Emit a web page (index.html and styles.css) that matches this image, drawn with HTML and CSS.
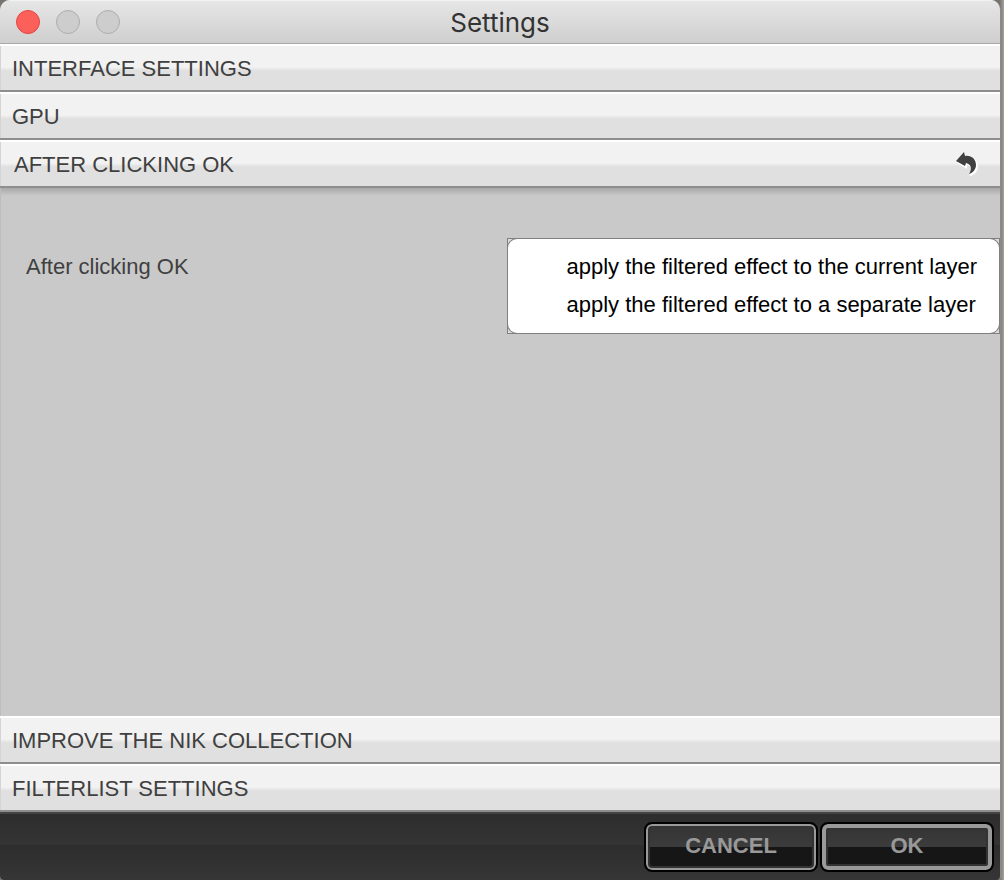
FILE: index.html
```html
<!DOCTYPE html>
<html lang="en">
<head>
<meta charset="UTF-8" />
<meta name="viewport" content="width=device-width, initial-scale=1" />
<title>Settings</title>
<link rel="stylesheet" href="styles.css">
</head>
<body>

<form class="window">
  <header class="titlebar">
    <div class="lights">
      <button type="button" class="light close" aria-label="Close"></button>
      <button type="button" class="light" aria-label="Minimize" disabled></button>
      <button type="button" class="light" aria-label="Zoom" disabled></button>
    </div>
    <h1>Settings</h1>
  </header>

  <main class="sections">
    <h2 class="section-header"><button type="button" class="toggle" aria-expanded="false">INTERFACE SETTINGS</button></h2>
    <h2 class="section-header"><button type="button" class="toggle" aria-expanded="false">GPU</button></h2>

    <div class="section-header">
      <h2><button type="button" class="toggle open" aria-expanded="true">AFTER CLICKING OK</button></h2>
      <button type="button" class="reset" aria-label="Reset">
        <svg width="24" height="26" viewBox="0 0 24 26">
          <path class="arrow-light" d="M1 12 L10 3 L10 7 C17 6 22 10 22 15 C22 20 19 24 14 25 L13 22 C16 19 17 15 11 14 L11 18 Z" />
          <path class="arrow" d="M0 10 L8 1 L9 5 C15 4 20 8 20 14 C20 18 17 22 13 23 C16 18 16 14 10 12 L9 15 Z" />
        </svg>
      </button>
    </div>

    <section class="panel">
      <div class="field">
        <label for="after-ok">After clicking OK</label>
        <div class="menu">
          <div class="menu-list">
            <select id="after-ok" size="2">
              <option value="current">apply the filtered effect to the current layer</option>
              <option value="separate">apply the filtered effect to a separate layer</option>
            </select>
          </div>
        </div>
      </div>
    </section>

    <h2 class="section-header"><button type="button" class="toggle" aria-expanded="false">IMPROVE THE NIK COLLECTION</button></h2>
    <h2 class="section-header"><button type="button" class="toggle" aria-expanded="false">FILTERLIST SETTINGS</button></h2>
  </main>

  <footer class="actions">
    <button type="button" class="action">CANCEL</button>
    <button type="submit" class="action primary">OK</button>
  </footer>
</form>

</body>
</html>
```
FILE: styles.css
```css
* {
  box-sizing: border-box;
}
body {
  margin: 0;
  padding-right: 3px;
  background: linear-gradient(90deg, #77736f calc(100% - 4px), #a8a39e);
  font-family: "Liberation Sans", Arial, sans-serif;
  font-size: 22px;
  color: #404040;
}
h1, h2 {
  margin: 0;
  font-size: 22px;
  font-weight: normal;
}
button {
  border: none;
  padding: 0;
  background: none;
  font: inherit;
  color: inherit;
}
.window {
  display: flex;
  flex-direction: column;
  min-height: 100vh;
  border-right: 1px solid #8a8a8a;
  border-radius: 10px 10px 4px 4px;
  overflow: hidden;
  background: #c9c9c9;
}

/* title bar */
.titlebar {
  display: grid;
  grid-template-columns: 1fr auto 1fr;
  align-items: center;
  height: 44px;
  padding: 0 16px;
  border-top: 1px solid #f2f2f2;
  border-bottom: 1px solid #a9a9a9;
  background: linear-gradient(#e6e6e6, #cfcfcf);
}
.titlebar h1 {
  font-family: Inter, sans-serif;
  font-size: 26px;
  color: #333;
}
.lights {
  display: flex;
  gap: 16px;
}
.light {
  width: 24px;
  height: 24px;
  border: 1px solid #adadad;
  border-radius: 50%;
  background: #cdcdcd;
}
.light.close {
  border-color: #e2463f;
  background: #fc605b;
}

/* accordion */
.sections {
  display: flex;
  flex-direction: column;
  flex: 1;
}
.section-header {
  display: flex;
  justify-content: space-between;
  height: 48px;
  border-top: 2px solid #fff;
  border-bottom: 2px solid #8e8e8e;
  background: linear-gradient(#f2f2f2 48%, #e0e0e0 56%);
  box-shadow: inset 1px 0 #d4d4d4;
}
.section-header h2 {
  display: flex;
  flex: 1;
}
.toggle {
  flex: 1;
  padding: 1px 12px 0;
  text-align: left;
}
.toggle.open {
  padding-left: 14px;
}
.reset {
  display: flex;
  align-items: center;
  padding: 0 20px;
}
.arrow {
  fill: #404040;
}
.arrow-light {
  fill: #fff;
}
.panel {
  flex: 1;
  padding-top: 50px;
  background: linear-gradient(#a9a9a9, #c9c9c9 8px);
  box-shadow: inset 1px 0 #bdbdbd;
}
.field {
  display: grid;
  grid-template-columns: 1fr auto;
  align-items: start;
}
.field label {
  padding: 16px 26px;
}
.menu {
  border: 1px solid #808080;
  background: #dedede;
}
.menu-list {
  padding: 9px 0;
  border-radius: 9px;
  background: #fff;
  box-shadow: 0 0 0 1px #808080;
}
.menu select {
  display: block;
  appearance: none;
  height: 76px;
  margin: 0;
  padding: 0;
  border: none;
  outline: none;
  overflow: hidden;
  background: #fff;
  font: inherit;
  color: #000;
}
.menu option {
  height: 38px;
  padding: 6px 22px 0 59px;
}

/* bottom bar */
.actions {
  display: flex;
  justify-content: flex-end;
  gap: 2px;
  height: 68px;
  padding: 8px 6px;
  border-top: 2px solid #444;
  background: linear-gradient(#2d2d2d, #343434 31px, #2d2d2d 31px, #363636);
}
.action {
  width: 174px;
  height: 50px;
  padding-bottom: 2px;
  border: 2px solid #000;
  border-radius: 8px;
  background: linear-gradient(#333, #3c3c3c 50%, #161616 50%, #161616);
  box-shadow: inset 0 0 0 2px #999, inset 0 0 0 4px #333;
  font-weight: bold;
  color: #999;
}
.action.primary {
  box-shadow: inset 0 0 0 4px #999, inset 0 0 0 6px #333;
}
```
